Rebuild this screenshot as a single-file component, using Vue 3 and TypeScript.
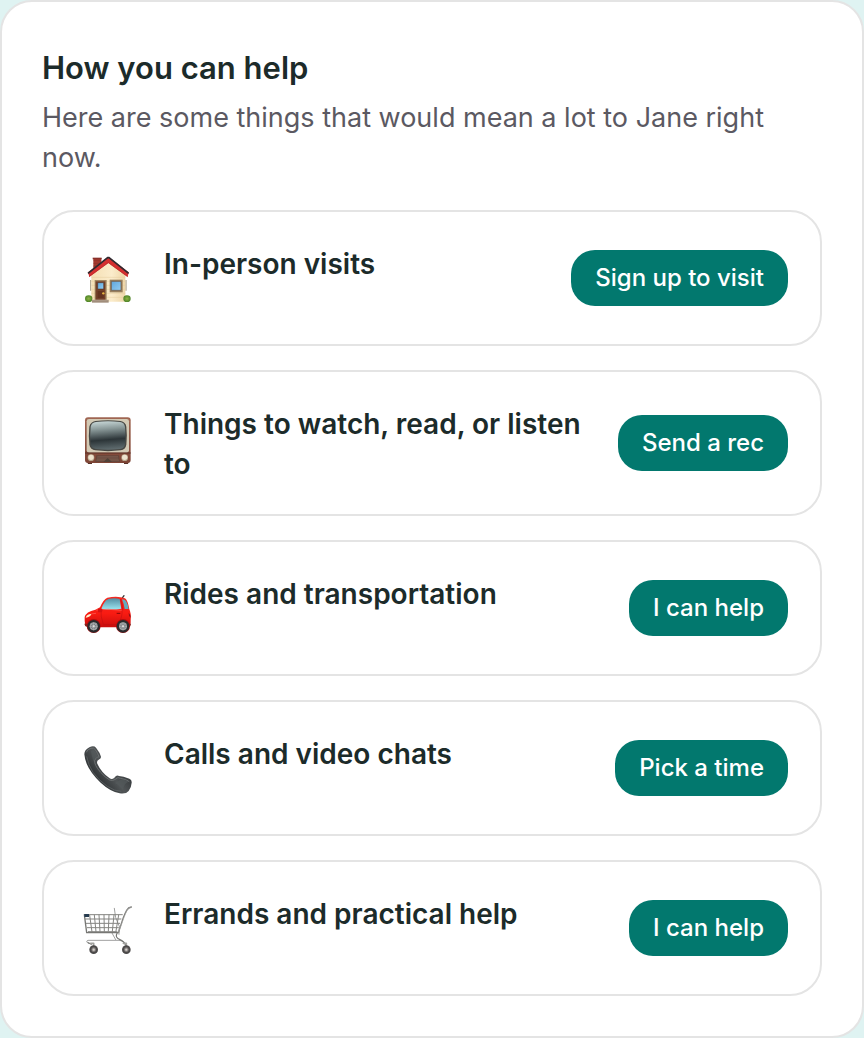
<script setup lang="ts">
type Icon = 'house' | 'tv' | 'car' | 'phone' | 'cart'

interface HelpItem {
  icon: Icon
  title: string
  action: string
}

const items: HelpItem[] = [
  { icon: 'house', title: 'In-person visits', action: 'Sign up to visit' },
  { icon: 'tv', title: 'Things to watch, read, or listen to', action: 'Send a rec' },
  { icon: 'car', title: 'Rides and transportation', action: 'I can help' },
  { icon: 'phone', title: 'Calls and video chats', action: 'Pick a time' },
  { icon: 'cart', title: 'Errands and practical help', action: 'I can help' },
]
</script>

<template>
  <main class="card">
    <h1 class="heading">How you can help</h1>
    <p class="intro">Here are some things that would mean a lot to Jane right now.</p>
    <ul class="list">
      <li v-for="item in items" :key="item.title" class="row">
        <div class="icon" aria-hidden="true">
          <svg v-if="item.icon === 'house'" viewBox="0 6 192 192">
            <defs>
              <linearGradient id="wall" x1="0" y1="0" x2="1" y2="0">
                <stop offset="0" stop-color="#f5dfb4" />
                <stop offset="0.6" stop-color="#fbeccb" />
                <stop offset="1" stop-color="#eed6a8" />
              </linearGradient>
              <linearGradient id="glass" x1="0" y1="0" x2="1" y2="1">
                <stop offset="0" stop-color="#5ea6dc" />
                <stop offset="1" stop-color="#93cdf2" />
              </linearGradient>
              <radialGradient id="bush">
                <stop offset="0" stop-color="#8fb544" />
                <stop offset="1" stop-color="#4e8428" />
              </radialGradient>
            </defs>
            <path d="M52 36h24v24L52 78z" fill="#a63a30" />
            <path d="M52 44h24M52 52h24M52 60h24" stroke="#81302a" stroke-width="1.5" />
            <path d="M50 35h27v5H50z" fill="#8a3029" />
            <path d="M42 102h4v32h-4zM148 102h4v32h-4z" fill="#b5aa94" />
            <path d="M46 84 97 46l51 38v83H46z" fill="url(#wall)" />
            <path d="M46 94h102M46 106h102M46 118h102M46 130h102M46 142h102M46 154h102" stroke="#e3cc9f" stroke-width="1.5" />
            <path d="M36 79 95 34h4l59 45-3 14-58-42-57 42z" fill="#d43030" />
            <path d="M36 82 95 35h4l59 47" fill="none" stroke="#2e2a30" stroke-width="5" />
            <path d="M39 92 97 50l58 42" fill="none" stroke="#b92327" stroke-width="2" />
            <path d="M56 102h36v62H56z" fill="#a08762" />
            <path d="M59 106h29v57H59z" fill="#73402a" />
            <path d="M65 110h18v19H65z" fill="url(#glass)" stroke="#512917" stroke-width="1.5" />
            <path d="M65 135h18v21H65z" fill="#633320" />
            <circle cx="82" cy="142" r="3.5" fill="#e8b642" />
            <path d="M101 101h39v38h-39z" fill="#99805e" />
            <path d="M106 106h29v27h-29z" fill="url(#glass)" stroke="#685342" stroke-width="2" />
            <ellipse cx="38" cy="158" rx="11" ry="10" fill="url(#bush)" />
            <ellipse cx="153" cy="158" rx="11" ry="10" fill="url(#bush)" />
            <path d="M48 162h50v8H48z" fill="#a18e7c" />
            <path d="M48 162h50" stroke="#c0ae9b" stroke-width="2" />
          </svg>

          <svg v-else-if="item.icon === 'tv'" viewBox="0 0 192 192">
            <defs>
              <linearGradient id="wood" x1="0" y1="0" x2="0" y2="1">
                <stop offset="0" stop-color="#a06652" />
                <stop offset="1" stop-color="#7d4435" />
              </linearGradient>
              <linearGradient id="screen" x1="0.4" y1="0" x2="0.5" y2="1">
                <stop offset="0" stop-color="#c5d5d5" />
                <stop offset="0.28" stop-color="#879696" />
                <stop offset="0.65" stop-color="#2c3538" />
                <stop offset="1" stop-color="#606d70" />
              </linearGradient>
            </defs>
            <path d="M34 162h14v6H36zM144 162h14l-2 6h-12z" fill="#593329" />
            <rect x="27" y="28" width="137" height="137" rx="9" fill="url(#wood)" />
            <rect x="32" y="33" width="127" height="101" rx="7" fill="#d3cab5" />
            <path d="M58 39q38-5 76 0 15 3 17 17 3 28 0 54-2 14-17 17-38 5-76 0-15-3-18-17-3-26 0-54 3-14 18-17z" fill="#474844" />
            <path d="M60 42q36-5 72 0 13 2 15 15 3 27 0 52-2 12-15 14-36 5-72 0-14-2-16-14-3-25 0-52 2-13 16-15z" fill="url(#screen)" />
            <path d="M27 135h137" stroke="#5b3027" stroke-width="3" />
            <path d="M61 142h68l3 20H58z" fill="#65463b" />
            <path d="M64 146h62M63 150h64M62 154h66M61 158h68" stroke="#987665" stroke-width="1.2" />
            <path d="m82 162 13-12 13 12z" fill="#514238" />
            <circle cx="45" cy="149" r="10" fill="#b8a78e" />
            <circle cx="45" cy="148" r="8" fill="#eee3ce" />
            <circle cx="146" cy="149" r="10" fill="#b8a78e" />
            <circle cx="146" cy="148" r="8" fill="#eee3ce" />
          </svg>

          <svg v-else-if="item.icon === 'car'" viewBox="0 -12 192 192">
            <defs>
              <linearGradient id="body" x1="0" y1="0" x2="0" y2="1">
                <stop offset="0" stop-color="#f32b22" />
                <stop offset="0.55" stop-color="#f91b12" />
                <stop offset="1" stop-color="#c80d0c" />
              </linearGradient>
              <linearGradient id="window" x1="0" y1="0" x2="0" y2="1">
                <stop offset="0" stop-color="#538fa3" />
                <stop offset="1" stop-color="#9ce4f0" />
              </linearGradient>
            </defs>
            <path d="m138 49 6-8" stroke="#333" stroke-width="4" stroke-linecap="round" />
            <path d="M26 105Q30 89 58 83L72 76Q82 52 94 47q31-7 53 2 8 5 13 33 6 12 4 32 1 17-7 22H34q-9-2-8-31z" fill="url(#body)" />
            <path d="M76 80Q84 57 97 51q18-4 34 0l5 29Q106 85 76 80z" fill="url(#window)" />
            <path d="M138 52q9 1 12 5 7 12 8 24h-12q-2-15-8-29z" fill="#65acbd" />
            <path d="M134 51q5 17 6 34" fill="none" stroke="#dc1514" stroke-width="4" />
            <path d="M75 82q-2 21 7 45M138 85q2 15-9 40M82 128h47" fill="none" stroke="#b80f10" stroke-width="1.5" />
            <path d="M60 84q35-5 77 1M31 102q18-9 29-8" fill="none" stroke="#ff6257" stroke-width="2" />
            <path d="M29 107q3-10 17-11-3 10-17 11z" fill="#fff2cf" />
            <path d="M158 92q7 6 6 15-7-5-6-15z" fill="#8f1015" />
            <path d="M66 81q9-4 14 3l-3 7H66z" fill="#d71211" />
            <path d="M122 94h11" stroke="#870708" stroke-width="3" />
            <path d="M25 125h11v8h-8zM157 125h8l-2 8h-7z" fill="#84201c" />
            <circle cx="53" cy="132" r="21" fill="#ad0d0e" />
            <circle cx="141" cy="132" r="21" fill="#ad0d0e" />
            <g v-for="cx in [53, 141]" :key="cx">
              <circle :cx="cx" cy="133" r="19" fill="#292a2c" />
              <circle :cx="cx" cy="133" r="12" fill="#9a9da0" />
              <circle :cx="cx" cy="133" r="8" fill="#777b80" />
              <path :d="`M${cx} 121v24M${cx - 12} 133h24M${cx - 8} 125l16 16M${cx + 8} 125l-16 16`" stroke="#b3b6b8" stroke-width="2" />
              <circle :cx="cx" cy="133" r="3" fill="#ddd" />
            </g>
          </svg>

          <svg v-else-if="item.icon === 'phone'" viewBox="0 0 192 192">
            <defs>
              <linearGradient id="handset" x1="0.3" y1="0.65" x2="0.7" y2="0.35">
                <stop offset="0" stop-color="#35393b" />
                <stop offset="0.5" stop-color="#515557" />
                <stop offset="1" stop-color="#3a3e40" />
              </linearGradient>
            </defs>
            <path d="M25 49q0-13 15-21 13-7 20 1 12 15 15 27 1 5-7 9-7 4-4 12 11 25 37 44 7 5 14-2 7-9 14-5 12 1 31 8 8 3 7 12-1 15-9 25-8 10-27 7-29-6-57-32Q43 104 32 77 26 61 25 49z" fill="url(#handset)" />
            <path d="M31 43q3-9 14-12 9-3 13 4 9 14 11 21-10 1-13 11-2 14 18 36 14 16 27 23 9 4 17-2 8-9 15-3 17 2 27 10" fill="none" stroke="#6b6f70" stroke-width="3" />
            <path d="M32 55q4 24 19 48 17 24 43 42 23 15 42 15" fill="none" stroke="#63686a" stroke-width="3" opacity=".7" />
            <path d="M45 40q8-8 13 0l8 18q-12 2-13 14-6-17-8-32zM126 130q13-11 31 1-13 5-16 24-12-15-24-20z" fill="#555a5c" opacity=".65" />
          </svg>

          <svg v-else viewBox="0 0 192 192">
            <g fill="none" stroke-linecap="round" stroke-linejoin="round">
              <path d="m115 31 4 28 11 26-1 24M38 136l-5-3q-3-4 3-6h93q10 0 14 6l6 8M108 105l11 20" stroke="#a0a1a0" stroke-width="3" />
              <path d="M27 50h112M29 63h106M31 76h100M34 89h93M37 101h86" stroke="#858582" stroke-width="3" />
              <path d="m41 52 7 50M55 51l5 50M69 51l3 49M84 51l1 49M99 51l-2 48M114 51l-5 49M128 51l-8 48" stroke="#858582" stroke-width="3" />
              <path d="M166 27q-9 1-14 10-4 7-10 22l-15 45H32L25 50" stroke="#777774" stroke-width="4" />
              <path d="M165 27q-9 2-13 11l-25 65" stroke="#b5b5b2" stroke-width="1.5" />
              <path d="M124 104q-9 15 8 21 11 4 18 17M46 139l-9-5" stroke="#777875" stroke-width="3.5" />
              <path d="M53 143v-7h-9M151 143v-7h-9" stroke="#a2a29f" stroke-width="5" />
            </g>
            <path d="M25 48h14v9H25z" fill="#263b50" />
            <g v-for="cx in [53, 151]" :key="cx">
              <circle :cx="cx" cy="155" r="13" fill="#4b4949" />
              <circle :cx="cx" cy="155" r="7" fill="#837e7c" />
              <circle :cx="cx" cy="155" r="3.5" fill="#d3cfca" />
            </g>
          </svg>
        </div>
        <h2 class="title">{{ item.title }}</h2>
        <button type="button" class="action">{{ item.action }}</button>
      </li>
    </ul>
  </main>
</template>

<style>
body {
  background: #dff3f2;
}
</style>

<style scoped>
.card {
  box-sizing: border-box;
  padding: 40px;
  border: 2px solid #e4e4e4;
  border-radius: 32px;
  background: #fff;
  color: #1c2b2a;
  font-family: Inter, "Liberation Sans", sans-serif;
}

.heading {
  margin: 0 0 4px;
  font-size: 31px;
  line-height: 52px;
  font-weight: 600;
}

.intro {
  margin: 0 0 32px;
  color: #5b5962;
  font-size: 27px;
  line-height: 40px;
}

.list {
  display: flex;
  flex-direction: column;
  gap: 24px;
  margin: 0;
  padding: 0;
  list-style: none;
}

.row {
  display: flex;
  align-items: flex-start;
  gap: 24px;
  padding: 30px 32px;
  border: 2px solid #e4e4e4;
  border-radius: 32px;
}

.icon {
  flex: none;
  width: 64px;
  padding: 6px 0 2px;
}

.icon svg {
  display: block;
  width: 64px;
  height: 64px;
}

.title {
  flex: 1;
  min-width: 0;
  margin: 0;
  padding-top: 2px;
  font-size: 28px;
  line-height: 40px;
  font-weight: 600;
}

.action {
  flex: none;
  align-self: center;
  height: 56px;
  padding: 0 24px;
  border: 0;
  border-radius: 24px;
  background: #02786e;
  color: #fff;
  font-family: inherit;
  font-size: 24px;
  line-height: 32px;
  font-weight: 500;
  white-space: nowrap;
  cursor: pointer;
}
</style>
